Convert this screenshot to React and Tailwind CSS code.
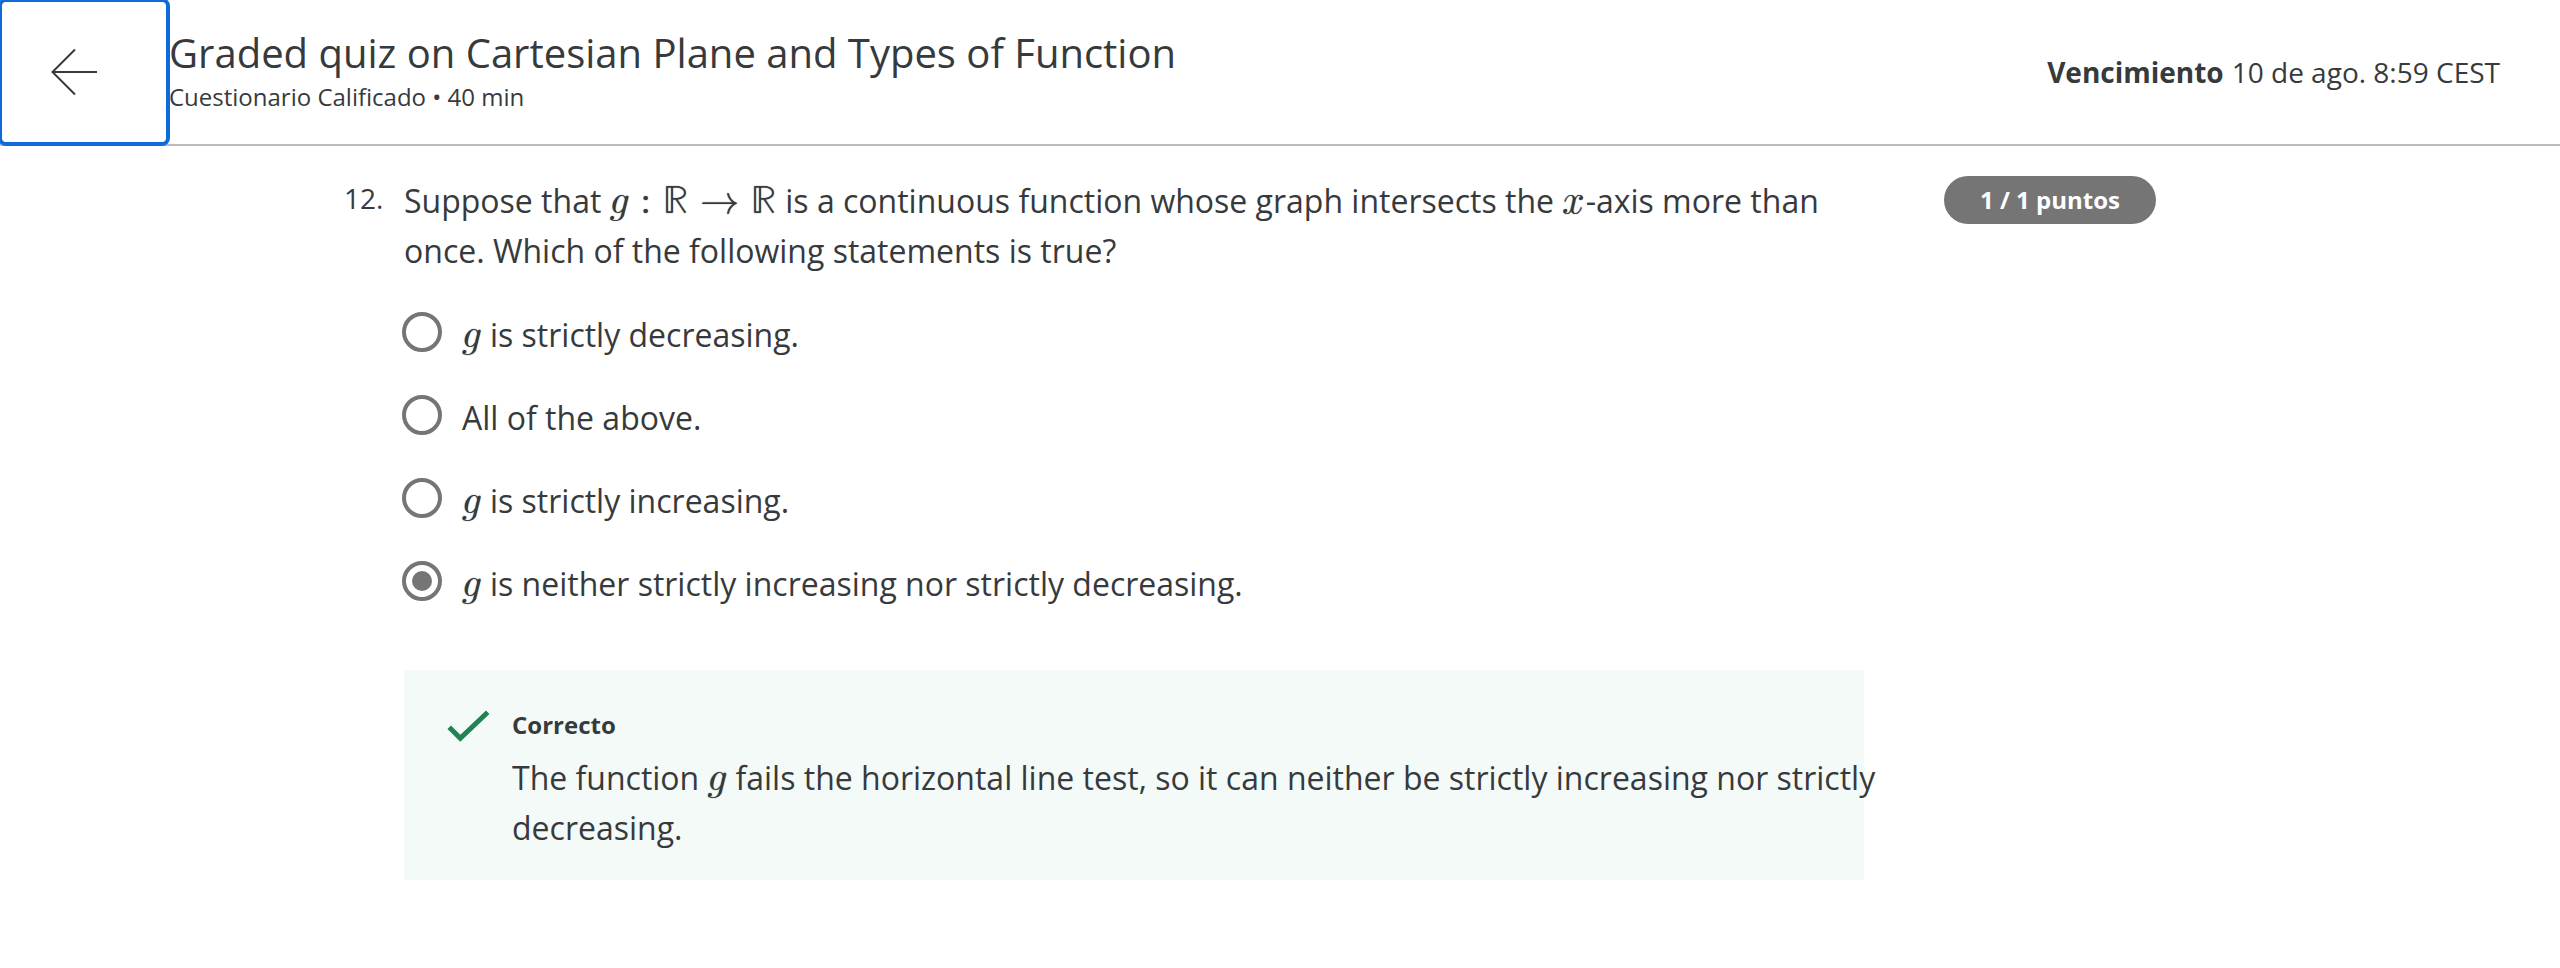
import React, { useState } from "react";

function M({ children }) {
  return (
    <span className="mr-px font-['Latin_Modern_Math','DejaVu_Math_TeX_Gyre',serif] text-[39px] leading-[0] whitespace-nowrap [text-shadow:0_0_1px_#373a3c]">
      {children}
    </span>
  );
}

const options = [
  { id: "decreasing", math: true, text: " is strictly decreasing." },
  { id: "all", math: false, text: "All of the above." },
  { id: "increasing", math: true, text: " is strictly increasing." },
  { id: "neither", math: true, text: " is neither strictly increasing nor strictly decreasing." },
];

function Header() {
  return (
    <header className="flex items-stretch border-b-2 border-[#bdbdbd]">
      <button
        type="button"
        aria-label="Volver"
        className="relative flex h-36 w-[168px] shrink-0 items-center rounded-md bg-white pl-[50px] outline-4 -outline-offset-2 outline-[#0f6bdc]"
      >
        <svg width="48" height="48" viewBox="0 0 48 48" fill="none" stroke="#373a3c" strokeWidth="2" aria-hidden="true">
          <path d="M47 24H2M25 1.5L2.5 24L25 46.5" />
        </svg>
      </button>
      <div className="flex flex-1 flex-col justify-center pt-0.5 pl-px">
        <h1 className="text-[40px] leading-12">Graded quiz on Cartesian Plane and Types of Function</h1>
        <p className="text-2xl leading-10">Cuestionario Calificado • 40 min</p>
      </div>
      <p className="flex items-center gap-2 pr-[60px] text-[28px]">
        <strong className="font-bold">Vencimiento</strong>
        <span>10 de ago. 8:59 CEST</span>
      </p>
    </header>
  );
}

function Option({ option, checked, onSelect }) {
  return (
    <label className="flex cursor-pointer items-start gap-5">
      <input
        type="radio"
        name="question-12"
        checked={checked}
        onChange={onSelect}
        className="mt-0.5 -ml-0.5 flex size-10 shrink-0 appearance-none items-center justify-center rounded-full border-4 border-[#757575] bg-white before:size-5 before:rounded-full checked:before:bg-[#757575]"
      />
      <span>
        {option.math && <M>𝑔</M>}
        {option.text}
      </span>
    </label>
  );
}

export default function App() {
  const [answer, setAnswer] = useState("neither");
  return (
    <div className="bg-white font-['Open_Sans',sans-serif] text-[#373a3c]">
      <Header />
      <main className="flex items-start pt-[30px] pr-[404px] pb-20 pl-[344px]">
        <span className="w-[60px] shrink-0 text-[28px] leading-[44px]">12.</span>
        <section className="min-w-0 flex-1 text-[32px] leading-[50px]">
          <p>
            Suppose that{" "}
            <M>
              𝑔<span className="mx-3">:</span>ℝ<span className="mx-3">→</span>ℝ
            </M>{" "}
            is a continuous function whose graph intersects the <M>𝑥</M>-axis more than once. Which of the following
            statements is true?
          </p>
          <div role="radiogroup" className="mt-[34px] flex flex-col gap-[33px]">
            {options.map((o) => (
              <Option key={o.id} option={o} checked={answer === o.id} onSelect={() => setAnswer(o.id)} />
            ))}
          </div>
          <div className="mt-[61px] flex items-start bg-[#f4faf8] pt-[37px] pb-[27px] pl-10">
            <svg width="48" height="36" viewBox="0 0 48 36" fill="none" stroke="#1f8354" strokeWidth="5" className="mr-5 shrink-0" aria-hidden="true">
              <path d="M5.2 20.2L16.3 31.3L43.7 5.2" />
            </svg>
            <div className="-mr-4 min-w-0 flex-1">
              <h2 className="text-2xl leading-9 font-bold">Correcto</h2>
              <p className="mt-2.5">
                The function <M>𝑔</M> fails the horizontal line test, so it can neither be strictly increasing nor
                strictly decreasing.
              </p>
            </div>
          </div>
        </section>
        <span className="ml-20 flex h-12 shrink-0 items-center rounded-full bg-[#757575] px-9 text-2xl font-bold text-white">
          1 / 1 puntos
        </span>
      </main>
    </div>
  );
}
